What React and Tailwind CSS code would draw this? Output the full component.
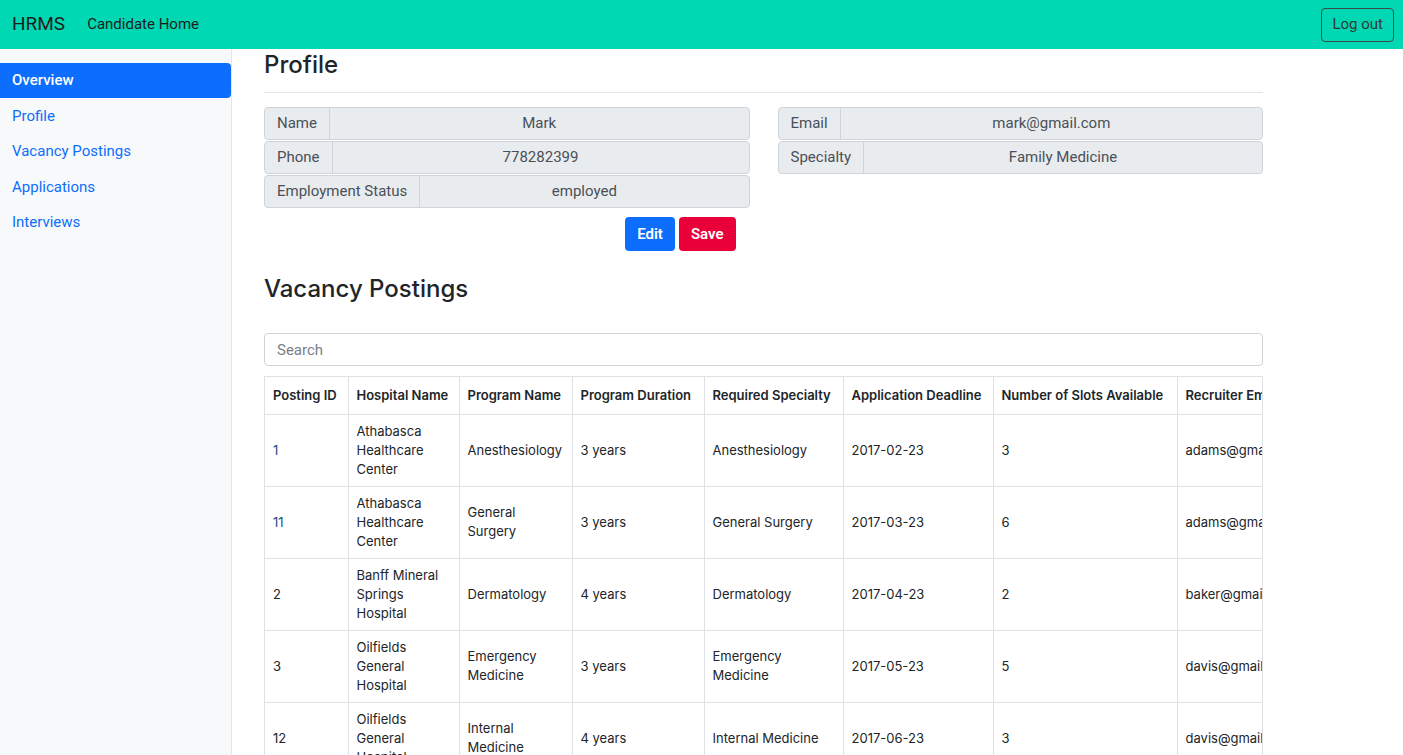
import React from 'react'

const NAV = ['Overview', 'Profile', 'Vacancy Postings', 'Applications', 'Interviews']

const LEFT_FIELDS = [
  ['Name', 'Mark'],
  ['Phone', '778282399'],
  ['Employment Status', 'employed'],
]

const RIGHT_FIELDS = [
  ['Email', 'mark@gmail.com'],
  ['Specialty', 'Family Medicine'],
]

const COLUMNS = [
  ['Posting ID', 'w-[83px]'],
  ['Hospital Name', 'w-[111px]'],
  ['Program Name', 'w-[113px]'],
  ['Program Duration', 'w-[132px]'],
  ['Required Specialty', 'w-[139px]'],
  ['Application Deadline', 'w-[150px]'],
  ['Number of Slots Available', 'w-[184px]'],
  ['Recruiter Email', 'w-[190px]'],
  ['Apply', 'w-[90px]'],
]

const ROWS = [
  ['1', 'Athabasca Healthcare Center', 'Anesthesiology', '3 years', 'Anesthesiology', '2017-02-23', '3', 'adams@gmail.com'],
  ['11', 'Athabasca Healthcare Center', 'General Surgery', '3 years', 'General Surgery', '2017-03-23', '6', 'adams@gmail.com'],
  ['2', 'Banff Mineral Springs Hospital', 'Dermatology', '4 years', 'Dermatology', '2017-04-23', '2', 'baker@gmail.com'],
  ['3', 'Oilfields General Hospital', 'Emergency Medicine', '3 years', 'Emergency Medicine', '2017-05-23', '5', 'davis@gmail.com'],
  ['12', 'Oilfields General Hospital', 'Internal Medicine', '4 years', 'Internal Medicine', '2017-06-23', '3', 'davis@gmail.com'],
]

function FieldGroup({ fields }) {
  return (
    <div className="flex flex-col gap-px">
      {fields.map(([label, value]) => (
        <div key={label} className="flex h-[33px] rounded border border-[#ced4da] bg-[#e9ecef] text-[15px] text-[#495057]">
          <span className="flex items-center px-3 border-r border-[#ced4da]">{label}</span>
          <span className="flex flex-1 items-center justify-center">{value}</span>
        </div>
      ))}
    </div>
  )
}

export default function App() {
  return (
    <div className="min-h-screen bg-white text-[#212529]" style={{ fontFamily: 'Roboto, "Liberation Sans", sans-serif' }}>
      {/* Top bar */}
      <header className="flex h-[49px] items-center bg-[#00d8b4] pl-3 pr-[9px]">
        <span className="text-[19px] text-[#1d1d1d]">HRMS</span>
        <span className="ml-[22px] text-[15px] text-[#1d1d1d]">Candidate Home</span>
        <button className="ml-auto h-[34px] rounded border border-[#3b4a47] px-[10px] text-[15px] text-[#2d3b38]">
          Log out
        </button>
      </header>

      <div className="flex min-h-[calc(100vh-49px)]">
        {/* Sidebar */}
        <aside className="w-[232px] shrink-0 border-r border-[#e3e5e8] bg-[#f8f9fa] pt-[14px]">
          <nav className="flex flex-col">
            {NAV.map((item, i) => (
              <a
                key={item}
                className={
                  i === 0
                    ? 'flex h-[35px] w-[231px] items-center rounded-r bg-[#0d6efd] pl-3 text-[15px] font-medium text-white'
                    : 'flex h-[35.5px] items-center pl-3 text-[15px] text-[#0d6efd]'
                }
              >
                {item}
              </a>
            ))}
          </nav>
        </aside>

        {/* Main */}
        <main className="ml-[32px] w-[999px]">
          <h2 className="border-b border-[#e5e5e5] pb-[13px] pt-px text-[24px] font-medium leading-[29px]" style={{ fontFamily: 'Inter, Roboto, sans-serif' }}>
            Profile
          </h2>

          <div className="mt-[14px] grid grid-cols-2 gap-[28px]">
            <div>
              <FieldGroup fields={LEFT_FIELDS} />
              <div className="mt-[9px] flex justify-end gap-[4px] pr-[14px]">
                <button className="h-[34px] rounded bg-[#0d6efd] px-3 text-[15px] font-semibold text-white">Edit</button>
                <button className="h-[34px] rounded bg-[#ea0039] px-3 text-[15px] font-semibold text-white">Save</button>
              </div>
            </div>
            <div>
              <FieldGroup fields={RIGHT_FIELDS} />
            </div>
          </div>

          <h3 className="mt-[23px] text-[24px] font-medium leading-[29px]" style={{ fontFamily: 'Inter, Roboto, sans-serif' }}>
            Vacancy Postings
          </h3>

          <input
            type="text"
            placeholder="Search"
            className="mt-[30px] block h-[33px] w-full rounded border border-[#ced4da] px-3 text-[15px] outline-none placeholder-[#7a8088]"
          />

          <div className="mt-[10px] overflow-hidden border border-[#dee2e6]">
            <table
              className="w-[1192px] table-fixed border-collapse text-[13px] leading-[19px]"
              style={{ fontFamily: 'Inter, Roboto, sans-serif' }}
            >
              <thead>
                <tr>
                  {COLUMNS.map(([name, w]) => (
                    <th key={name} className={`${w} h-[37px] border-b border-r border-[#dee2e6] px-2 text-left font-semibold whitespace-nowrap`}>
                      {name}
                    </th>
                  ))}
                </tr>
              </thead>
              <tbody>
                {ROWS.map((row) => (
                  <tr key={row[0]}>
                    {row.map((cell, j) => (
                      <td
                        key={j}
                        className={`h-[72px] border-b border-r border-[#dee2e6] px-2 align-middle ${
                          j === 0 && (row[0] === '1' || row[0] === '11') ? 'text-[#234f86]' : ''
                        } ${j === 7 ? 'whitespace-nowrap' : ''}`}
                      >
                        {cell}
                      </td>
                    ))}
                    <td className="h-[72px] border-b border-[#dee2e6] px-2 align-middle"></td>
                  </tr>
                ))}
              </tbody>
            </table>
          </div>
        </main>
      </div>
    </div>
  )
}
